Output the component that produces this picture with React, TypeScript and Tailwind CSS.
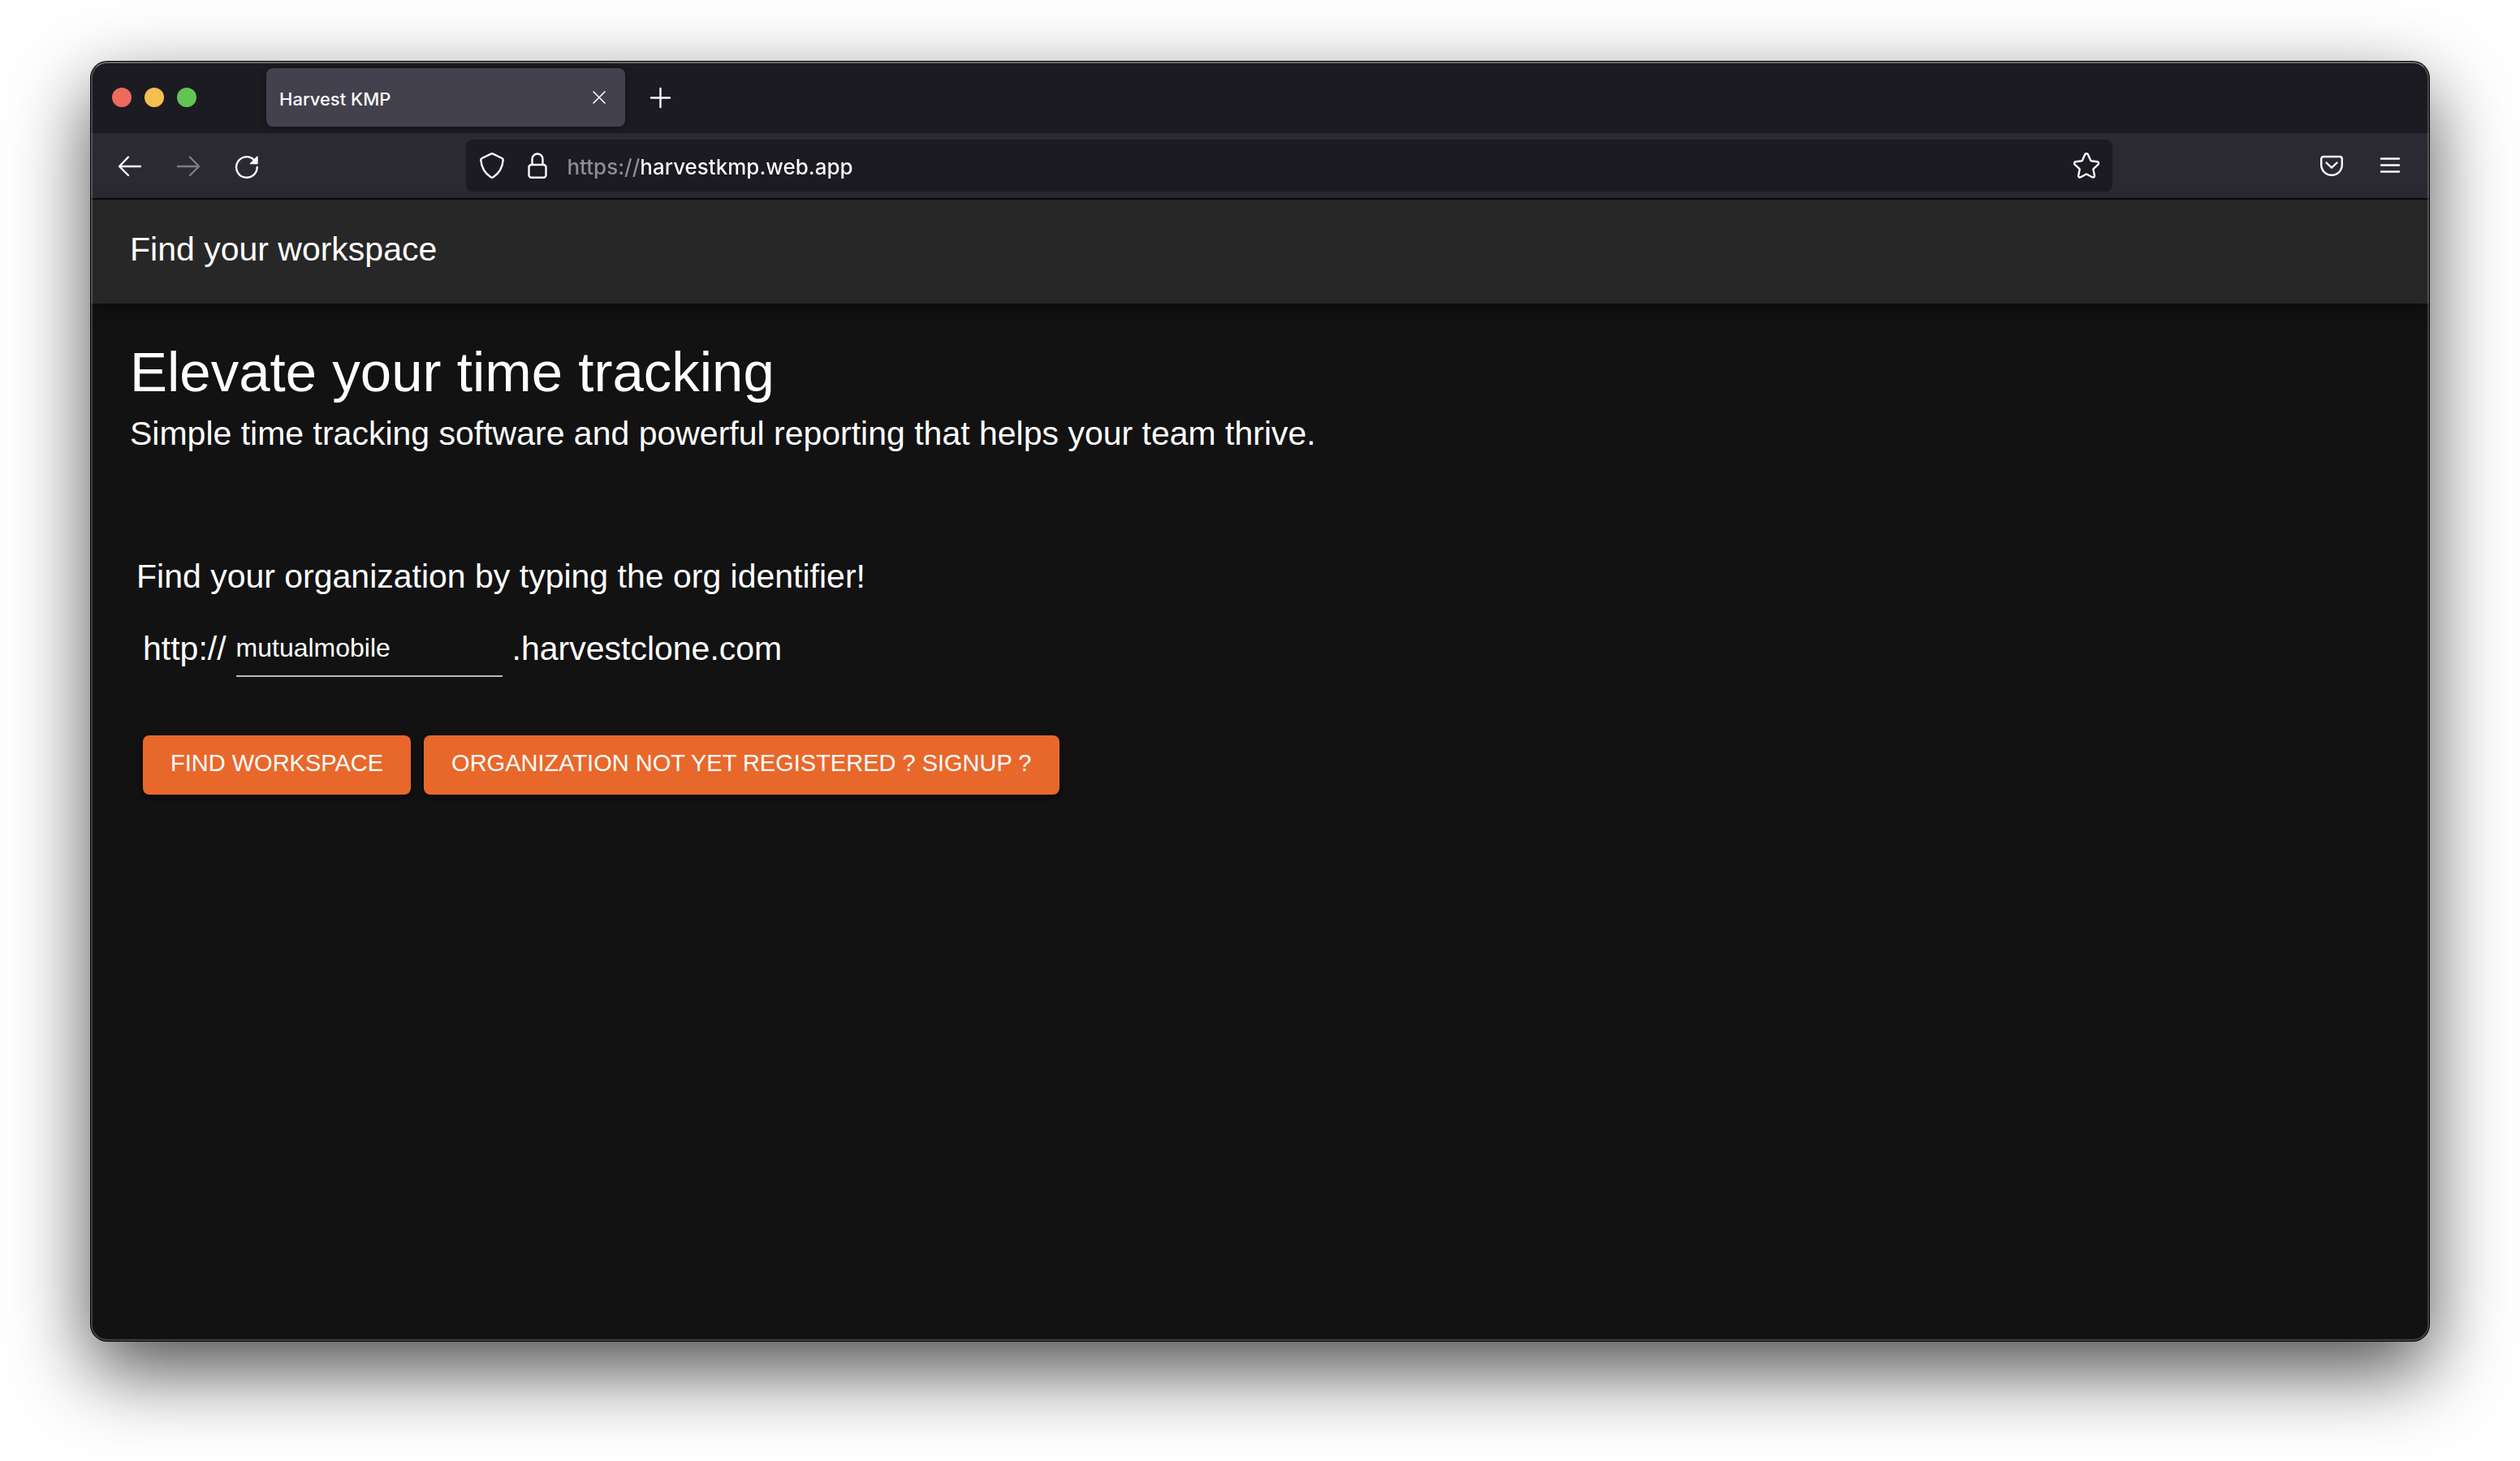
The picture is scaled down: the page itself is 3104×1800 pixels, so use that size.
import React, { useState } from "react";

type IconProps = { children: React.ReactNode; className?: string };

/* Toolbar glyphs share a 32-unit box and a rounded stroke. */
function Icon({ children, className = "size-8" }: IconProps) {
  return (
    <svg
      viewBox="0 0 32 32"
      className={className}
      fill="none"
      stroke="currentColor"
      strokeWidth="2.4"
      strokeLinecap="round"
      strokeLinejoin="round"
      aria-hidden="true"
    >
      {children}
    </svg>
  );
}

function ToolButton({
  label,
  disabled,
  children,
}: {
  label: string;
  disabled?: boolean;
  children: React.ReactNode;
}) {
  return (
    <button
      type="button"
      aria-label={label}
      disabled={disabled}
      className="flex size-16 shrink-0 items-center justify-center rounded-lg text-[#fbfbfe] disabled:text-[#7e7d84]"
    >
      {children}
    </button>
  );
}

function TabStrip() {
  return (
    <div className="flex h-22 items-center bg-[#1c1b22] pl-[26px]">
      <div className="flex w-[190px] shrink-0 gap-4">
        <button type="button" aria-label="Close window" className="size-6 rounded-full bg-[#ed6a5e]" />
        <button type="button" aria-label="Minimize window" className="size-6 rounded-full bg-[#f4bf4f]" />
        <button type="button" aria-label="Zoom window" className="size-6 rounded-full bg-[#61c554]" />
      </div>
      <div className="flex h-18 w-[442px] items-center justify-between rounded-lg bg-[#42414d] pl-4 pr-3 shadow-[0_0_8px_rgba(0,0,0,0.4)]">
        <span className="pt-1 text-[22px] leading-8 font-medium">Harvest KMP</span>
        <button type="button" aria-label="Close tab" className="flex size-10 items-center justify-center">
          <svg viewBox="0 0 16 16" className="size-4" fill="none" stroke="currentColor" strokeWidth="1.6" strokeLinecap="round" aria-hidden="true">
            <path d="M1 1l14 14M15 1L1 15" />
          </svg>
        </button>
      </div>
      <button type="button" aria-label="New tab" className="ml-3 flex size-16 items-center justify-center">
        <Icon>
          <path d="M15.500 5v23M4 16.500h23" />
        </Icon>
      </button>
    </div>
  );
}

function AddressBar() {
  return (
    <div className="flex h-16 flex-[17] items-center rounded-lg bg-[#1c1b22]">
      <ToolButton label="Tracking protection">
        <Icon>
          <path d="M16 1.300c.5 0 1 .1 1.400.4l11 5.300c.9.400 1.400 1.300 1.300 2.200C29 18 25 25.500 17.500 30.200a2.800 2.800 0 0 1-3 0C7 25.500 3 18 2.300 9.200 2.200 8.300 2.700 7.400 3.600 7l11-5.300c.4-.3.900-.4 1.400-.4z" />
        </Icon>
      </ToolButton>
      <button type="button" aria-label="Site information" className="flex h-16 w-12 shrink-0 items-center justify-center">
        <Icon>
          <path d="M9.500 15V8a6.500 6.500 0 0 1 13 0v7" />
          <rect x="5.500" y="15" width="21" height="15.700" rx="3" />
        </Icon>
      </button>
      <input
        type="text"
        aria-label="Address"
        defaultValue="https://harvestkmp.web.app"
        className="ml-3 h-16 min-w-0 flex-1 bg-[linear-gradient(90deg,#8f8e95_90px,#fbfbfe_90px)] bg-clip-text pt-0.5 text-[26px] font-medium text-transparent outline-none"
      />
      <ToolButton label="Bookmark this page">
        <Icon>
          <path d="M14.200 2.300c.7-1.500 2.900-1.500 3.600 0l3.300 7.300c.2.400.5.600.9.700l7.300.9c1.700.2 2.300 2.300 1.100 3.400l-5.600 5.200c-.3.300-.5.700-.4 1.100l1.500 7.400c.3 1.600-1.400 2.800-2.800 2l-6.500-3.600c-.4-.2-.8-.2-1.200 0l-6.500 3.600c-1.400.8-3.100-.4-2.800-2L7.600 20.900c.1-.4-.1-.8-.4-1.100l-5.600-5.200c-1.200-1.100-.6-3.200 1.100-3.400l7.300-.9c.4-.1.700-.3.900-.7z" />
        </Icon>
      </ToolButton>
    </div>
  );
}

function Toolbar() {
  return (
    <div className="flex h-[82px] items-center border-b-2 border-[#0c0c0d] bg-[#2b2a33] px-4">
      <div className="flex gap-2">
        <ToolButton label="Go back">
          <Icon>
            <path d="M29 17H3.500M14 5.500L3 17l11 11" />
          </Icon>
        </ToolButton>
        <ToolButton label="Go forward" disabled>
          <Icon>
            <path d="M3 17h25.500M18 5.500L29 17 18 28" />
          </Icon>
        </ToolButton>
        <ToolButton label="Reload">
          <Icon>
            <path d="M28.700 18A12.800 12.800 0 1 1 24.500 8.500" />
            <path d="M29 5v8.500h-8.500z" fill="currentColor" strokeWidth="1.400" />
          </Icon>
        </ToolButton>
      </div>
      <div className="flex-[2]" />
      <AddressBar />
      <div className="flex-[2]" />
      <div className="flex gap-2">
        <ToolButton label="Save to Pocket">
          <Icon>
            <path d="M6 5h20a2.800 2.800 0 0 1 2.800 2.800V15a12.800 12.800 0 0 1-25.600 0V7.800A2.800 2.800 0 0 1 6 5z" />
            <path d="M9.500 12.500L16 18.700l6.500-6.200" />
          </Icon>
        </ToolButton>
        <ToolButton label="Open application menu">
          <Icon>
            <path d="M5 7.500h22M5 15.500h22M5 23.500h22" />
          </Icon>
        </ToolButton>
      </div>
    </div>
  );
}

const actionClass =
  "rounded-lg bg-[#e8682b] px-[34px] pt-3 pb-[17px] text-[29px] leading-11 uppercase text-white shadow-[0_4px_8px_rgba(0,0,0,0.5)]";

function FindWorkspace() {
  const [org, setOrg] = useState("mutualmobile");
  return (
    <main className="flex-1 px-12 pt-11 text-[41px] leading-16">
      <h1 className="pb-0.5 text-[69px] leading-[82px]">Elevate your time tracking</h1>
      <p>Simple time tracking software and powerful reporting that helps your team thrive.</p>
      <form className="px-2 pt-28" onSubmit={(e) => e.preventDefault()}>
        <p>Find your organization by typing the org identifier!</p>
        <div className="flex items-center px-2 pt-[22px]">
          <label htmlFor="org">http://</label>
          <input
            id="org"
            type="text"
            value={org}
            onChange={(e) => setOrg(e.target.value)}
            className="mx-3 h-[70px] w-[328px] border-b-2 border-[#b9b9b9] text-[32px] outline-none"
          />
          <span>.harvestclone.com</span>
        </div>
        <div className="flex flex-wrap gap-4 px-2 pt-18">
          <button type="submit" className={actionClass}>
            Find Workspace
          </button>
          <button type="button" className={actionClass}>
            Organization not yet registered ? Signup ?
          </button>
        </div>
      </form>
    </main>
  );
}

export default function App() {
  return (
    <div className="flex min-h-screen flex-col bg-white px-28 pt-19 pb-37">
      <div className="relative flex flex-1 flex-col rounded-[20px] bg-[#121212] font-['Liberation_Sans',Arial,sans-serif] text-white shadow-[0_0_0_1px_#000,0_36px_96px_rgba(0,0,0,0.7)]">
        <div className="flex flex-1 flex-col overflow-hidden rounded-[20px]">
          <div className="font-['Inter',sans-serif] text-[#fbfbfe]">
            <TabStrip />
            <Toolbar />
          </div>
          <header className="flex h-32 shrink-0 items-center bg-[#272727] px-12 pb-1.5 text-[41px] leading-16 shadow-[0_4px_16px_rgba(0,0,0,0.5)]">
            Find your workspace
          </header>
          <FindWorkspace />
        </div>
        <div className="pointer-events-none absolute inset-0 rounded-[20px] border-2 border-white/20 border-t-white/35" />
      </div>
    </div>
  );
}
